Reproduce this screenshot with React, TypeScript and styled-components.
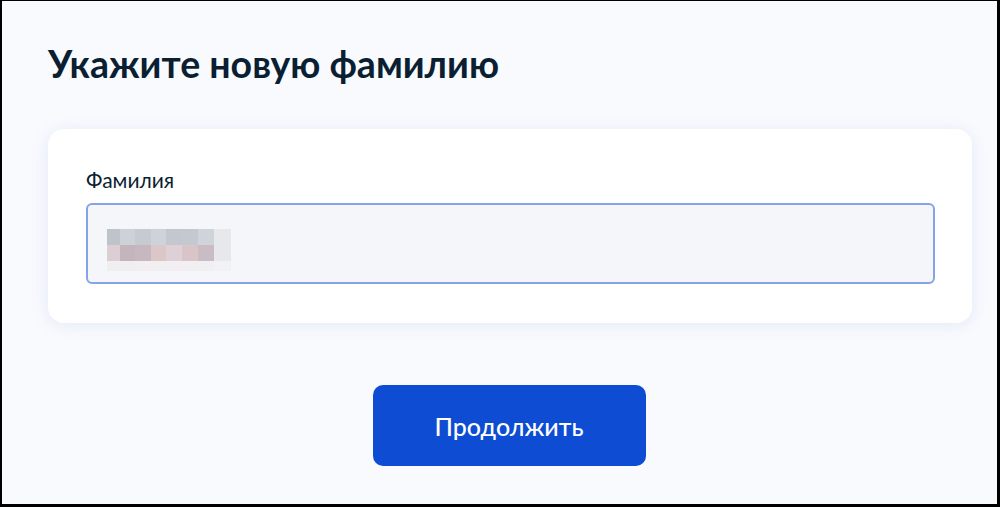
import React from "react";
import styled, { createGlobalStyle } from "styled-components";

const Global = createGlobalStyle`
  html, body { margin: 0; padding: 0; background: #000; }
  body { font-family: Lato, "Noto Sans", sans-serif; color: #0b1f33; }
  * { box-sizing: border-box; }
`;

const Frame = styled.div`
  width: 1000px;
  height: 507px;
  border-style: solid;
  border-color: #000;
  border-width: 1px 3px 3px 2px;
  background: #f9fafe;
  overflow: hidden;
`;

const Content = styled.main`
  display: flex;
  flex-direction: column;
  padding: 38px 25px 0 46px;
`;

const Title = styled.h1`
  margin: 0;
  font-size: 37.5px;
  line-height: 50px;
  font-weight: 700;
  color: #0b1f33;
  letter-spacing: 0;
`;

const Card = styled.section`
  margin-top: 40px;
  background: #fff;
  border-radius: 16px;
  box-shadow: 0 2px 16px rgba(200, 212, 240, 0.45);
  padding: 37px 37px 37px 38px;
  height: 194px;
  display: flex;
  flex-direction: column;
  gap: 9px;
`;

const Label = styled.label`
  font-size: 21px;
  line-height: 28px;
  color: #0b1f33;
`;

const Input = styled.div`
  height: 81px;
  border: 2px solid #86a2e8;
  border-radius: 6px;
  background: #f5f6fa;
  display: flex;
  align-items: flex-start;
  padding: 24px 0 0 19px;
`;

const Actions = styled.div`
  display: flex;
  justify-content: center;
  margin-top: 62px;
`;

const Button = styled.button`
  width: 273px;
  height: 81px;
  border: none;
  border-radius: 10px;
  background: #0d4cd3;
  color: #fff;
  font-family: Lato, "Noto Sans", sans-serif;
  font-size: 25px;
  font-weight: 500;
  cursor: pointer;
  margin-left: -2px;
`;

const rows: string[][] = [
  ["#bfc4ca", "#cdd2d9", "#c6cbd2", "#ced2d9", "#c3c8cf", "#c4c9d0", "#cfd4da", "#e6e8ec"],
  ["#dccfd3", "#c4b4bc", "#c7b8c0", "#dbc6c8", "#ddd0d6", "#d9c5c7", "#c9bcc5", "#e8e8ec"],
  ["#efeff2", "#f1eef1", "#f2eef1", "#f2eff2", "#f2eef1", "#f1eff2", "#f0f0f3", "#f2f2f5"],
];
const colX = [0, 13, 28, 44, 59, 75, 91, 107, 124];
const rowY = [0, 16, 32, 42];

function Pixelated() {
  return (
    <svg width="124" height="42" viewBox="0 0 124 42" aria-hidden>
      {rows.map((r, ri) =>
        r.map((c, ci) => (
          <rect
            key={`${ri}-${ci}`}
            x={colX[ci]}
            y={rowY[ri]}
            width={colX[ci + 1] - colX[ci]}
            height={rowY[ri + 1] - rowY[ri]}
            fill={c}
          />
        ))
      )}
    </svg>
  );
}

export default function App() {
  return (
    <>
      <Global />
      <Frame>
        <Content>
          <Title>Укажите новую фамилию</Title>
          <Card>
            <Label>Фамилия</Label>
            <Input>
              <Pixelated />
            </Input>
          </Card>
          <Actions>
            <Button>Продолжить</Button>
          </Actions>
        </Content>
      </Frame>
    </>
  );
}
